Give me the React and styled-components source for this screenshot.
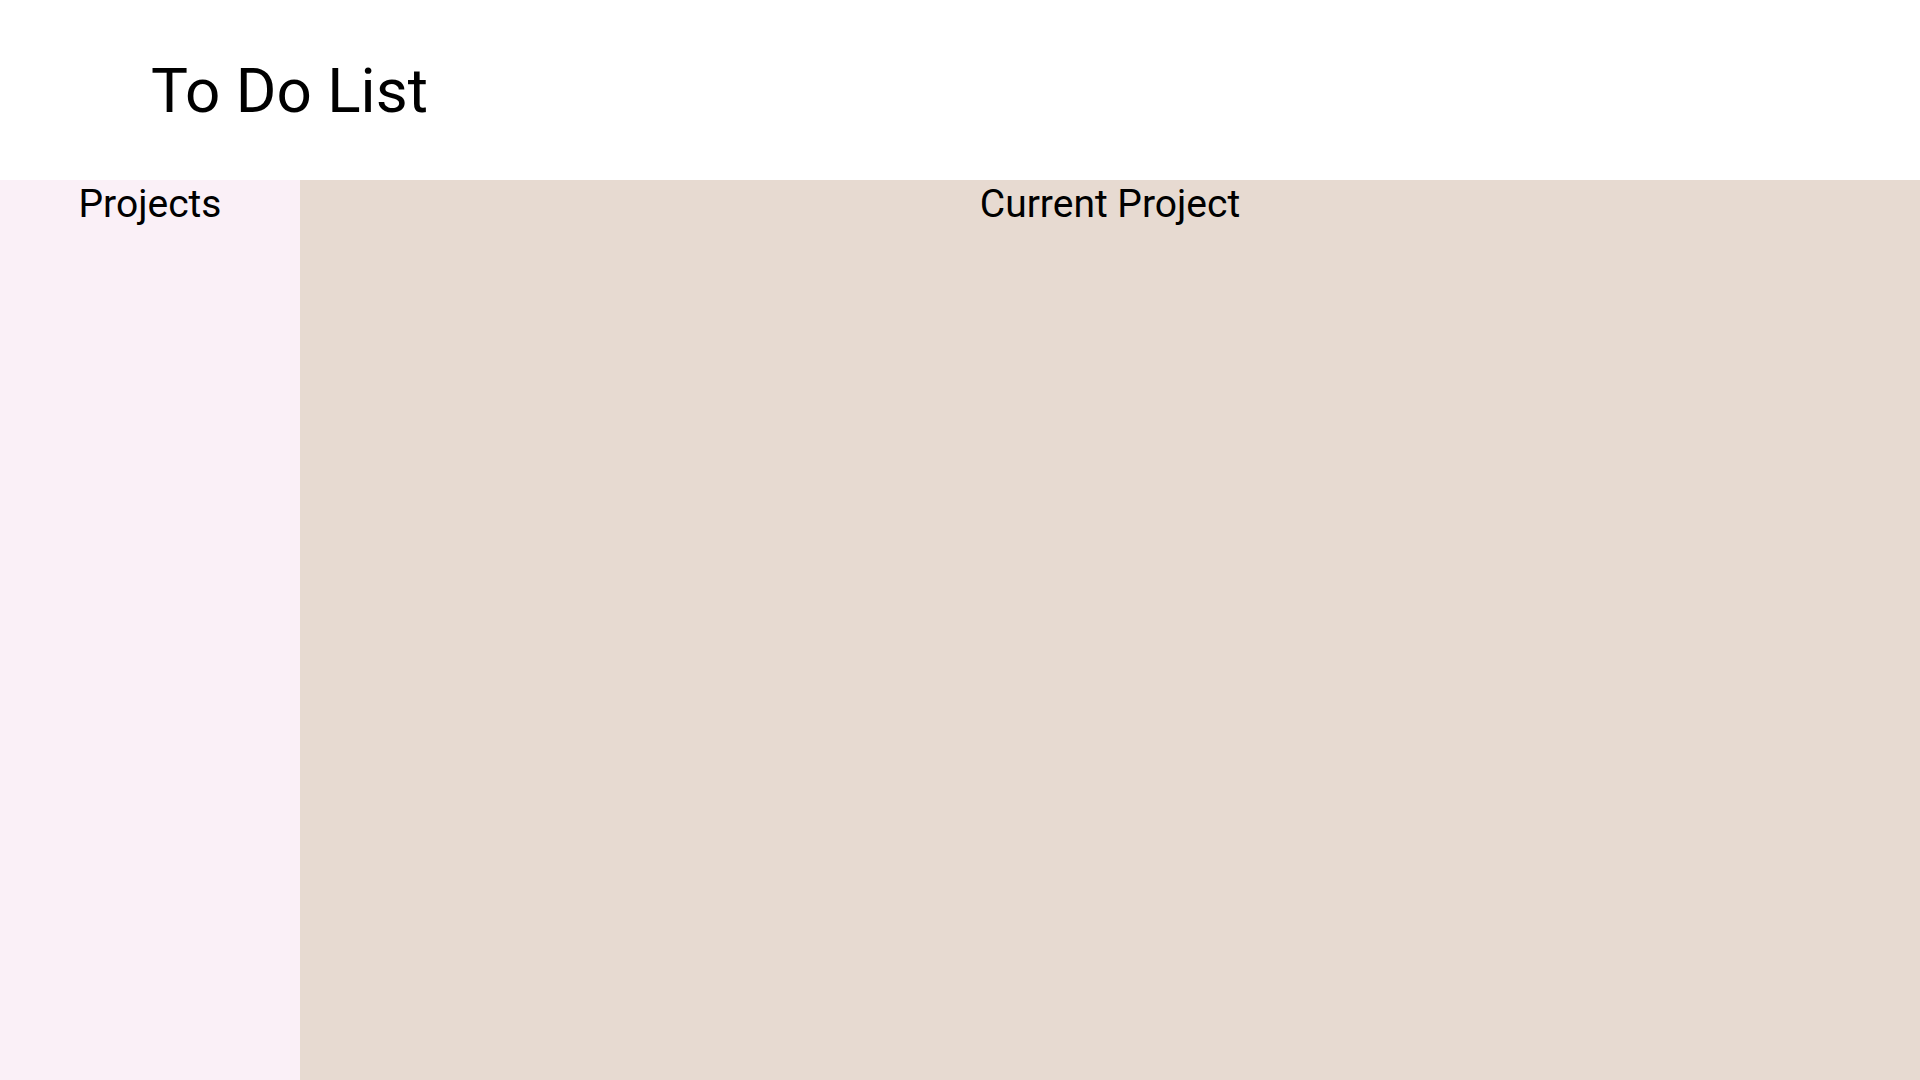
import React from 'react';
import styled, { createGlobalStyle } from 'styled-components';

const GlobalStyle = createGlobalStyle`
  html, body, #root {
    margin: 0;
    padding: 0;
    height: 100%;
  }
  body {
    font-family: Roboto, "Noto Sans", sans-serif;
    color: #000;
    background: #fff;
  }
`;

const Page = styled.div`
  display: grid;
  grid-template-rows: 180px 1fr;
  height: 100vh;
`;

const Header = styled.header`
  display: flex;
  align-items: center;
  padding-left: 151px;
  background: #fff;
`;

const Title = styled.h1`
  margin: 0;
  font-size: 62px;
  font-weight: 400;
`;

const Content = styled.div`
  display: grid;
  grid-template-columns: 300px 1fr;
`;

const Panel = styled.section`
  background: ${(p) => p.$bg};
`;

const PanelTitle = styled.h2`
  margin: 0;
  padding-top: 1px;
  font-size: 39px;
  font-weight: 400;
  text-align: center;
`;

const App = () => {
  return (
    <>
      <GlobalStyle />
      <Page>
        <Header>
          <Title>To Do List</Title>
        </Header>
        <Content>
          <Panel $bg="#faf0f7">
            <PanelTitle>Projects</PanelTitle>
          </Panel>
          <Panel $bg="#e7dad1">
            <PanelTitle>Current Project</PanelTitle>
          </Panel>
        </Content>
      </Page>
    </>
  );
};

export default App;
